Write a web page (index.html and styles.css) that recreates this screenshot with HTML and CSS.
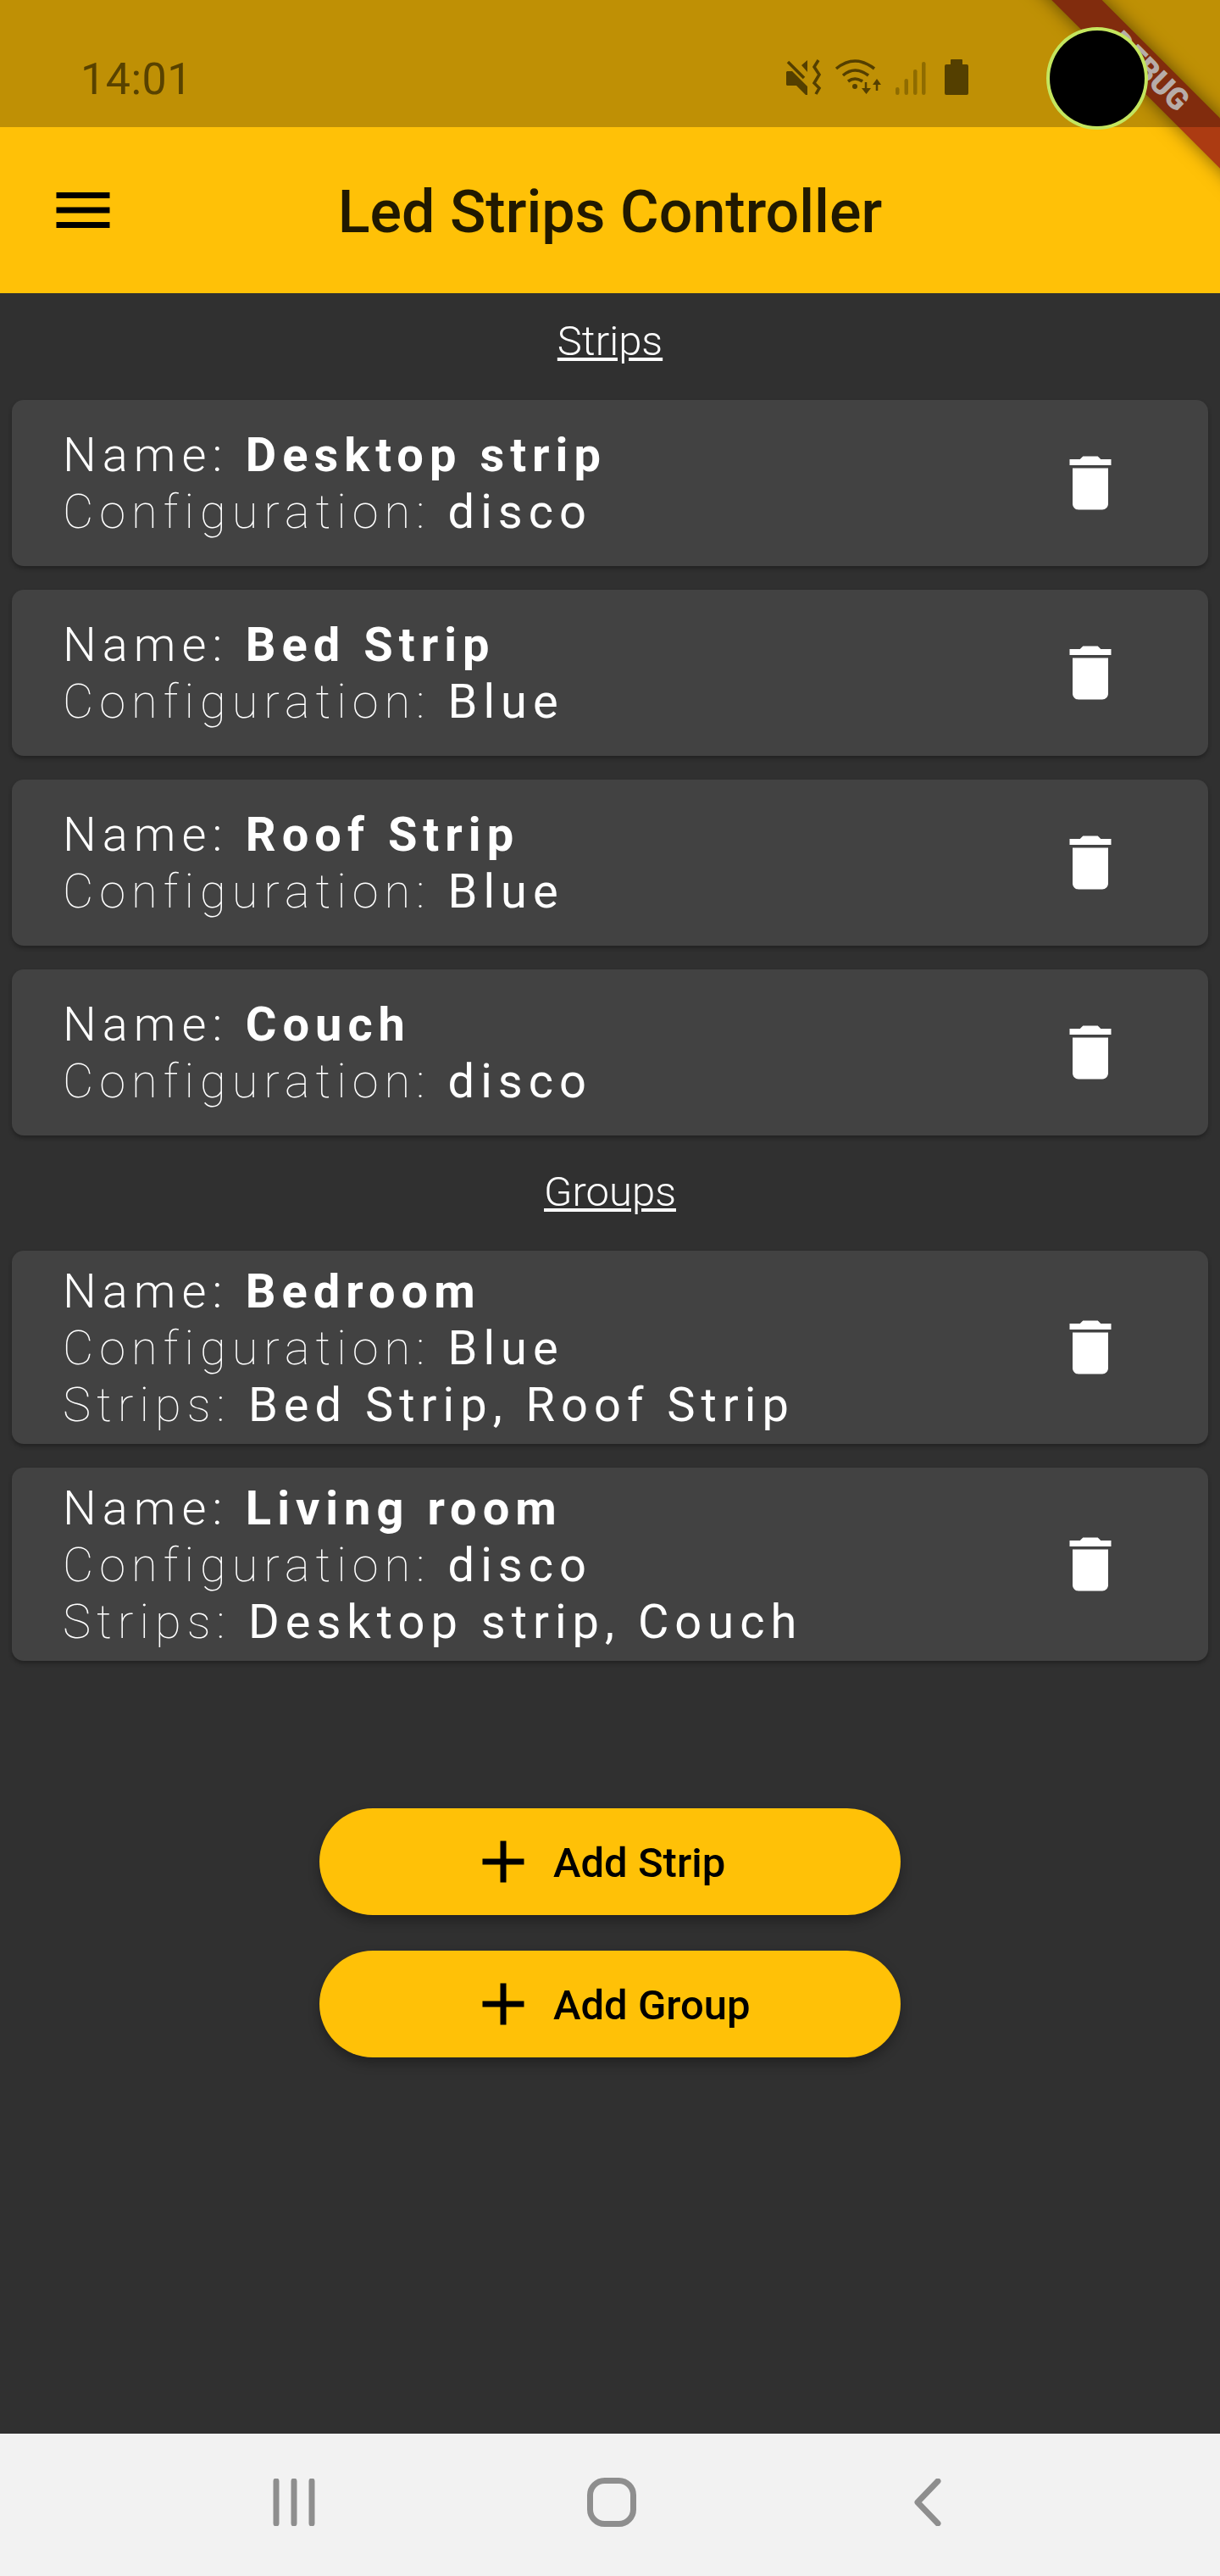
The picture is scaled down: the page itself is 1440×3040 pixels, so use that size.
FILE: index.html
```html
<!DOCTYPE html>
<html lang="en">
<head>
    <meta charset="UTF-8">
    <meta name="viewport" content="width=device-width, initial-scale=1.0">
    <title>Led Strips Controller</title>
    <link rel="stylesheet" href="styles.css">
</head>
<body>
    <header class="top">
        <div class="banner-clip"><div class="banner">DEBUG</div></div>
        <div class="statusbar">
            <span class="clock">14:01</span>
            <svg class="status-icons" width="240" height="65" viewBox="0 0 240 65">
                <path class="ic-fill" d="M8 25l1-1h6L33 42v10h-2L20 41H9l-1-1zM26 17l7-6v14z"/>
                <path class="ic-line" d="M10 13l19 19"/>
                <path class="ic-line" d="M46 11l-5 8 6 9-6 10 6 6-4 7"/>
                <path class="ic-line" d="M67 21q22-18 45 0M75 29q14-12 30 0M81 36q8-6 17 0"/>
                <circle class="ic-dot" cx="89" cy="42" r="3"/>
                <path class="ic-line thin" d="M102 37v12M115 36v11"/>
                <path class="ic-fill" d="M97 44h11l-5.500 7zM110 40h10l-5-7z"/>
                <g class="ic-weak">
                    <rect x="137" y="43" width="4.500" height="9" rx="2.200"/>
                    <rect x="147.500" y="33" width="4.500" height="19" rx="2.200"/>
                    <rect x="158" y="22" width="4.500" height="30" rx="2.200"/>
                    <rect x="168" y="13" width="4.500" height="39" rx="2.200"/>
                </g>
                <path class="ic-fill" d="M203 10h12a1 1 0 0 1 1 1v5h5a2 2 0 0 1 2 2v32a2 2 0 0 1-2 2h-24a2 2 0 0 1-2-2V18a2 2 0 0 1 2-2h5v-5a1 1 0 0 1 1-1z"/>
            </svg>
        </div>
        <div class="appbar">
            <svg class="menu-icon" width="84" height="84" viewBox="0 0 24 24">
                <path d="M3 18h18v-2H3v2zm0-5h18v-2H3v2zm0-7v2h18V6H3z"/>
            </svg>
            <h1 class="title">Led Strips Controller</h1>
        </div>
        <div class="camera"></div>
    </header>

    <main class="content">
        <h2 class="section-label">Strips</h2>
        <div class="card-list">
            <div class="card">
                <div class="card-text">
                    <div class="line"><span class="key-name">Name: </span><b>Desktop strip</b></div>
                    <div class="line"><span class="key">Configuration: </span>disco</div>
                </div>
                <svg class="trash" width="84" height="84" viewBox="0 0 24 24"><path d="M6 19c0 1.100.9 2 2 2h8c1.100 0 2-.9 2-2V7H6v12zM19 4h-3.500l-1-1h-5l-1 1H5v2h14V4z"/></svg>
            </div>
            <div class="card">
                <div class="card-text">
                    <div class="line"><span class="key-name">Name: </span><b>Bed Strip</b></div>
                    <div class="line"><span class="key">Configuration: </span>Blue</div>
                </div>
                <svg class="trash" width="84" height="84" viewBox="0 0 24 24"><path d="M6 19c0 1.100.9 2 2 2h8c1.100 0 2-.9 2-2V7H6v12zM19 4h-3.500l-1-1h-5l-1 1H5v2h14V4z"/></svg>
            </div>
            <div class="card">
                <div class="card-text">
                    <div class="line"><span class="key-name">Name: </span><b>Roof Strip</b></div>
                    <div class="line"><span class="key">Configuration: </span>Blue</div>
                </div>
                <svg class="trash" width="84" height="84" viewBox="0 0 24 24"><path d="M6 19c0 1.100.9 2 2 2h8c1.100 0 2-.9 2-2V7H6v12zM19 4h-3.500l-1-1h-5l-1 1H5v2h14V4z"/></svg>
            </div>
            <div class="card">
                <div class="card-text">
                    <div class="line"><span class="key-name">Name: </span><b>Couch</b></div>
                    <div class="line"><span class="key">Configuration: </span>disco</div>
                </div>
                <svg class="trash" width="84" height="84" viewBox="0 0 24 24"><path d="M6 19c0 1.100.9 2 2 2h8c1.100 0 2-.9 2-2V7H6v12zM19 4h-3.500l-1-1h-5l-1 1H5v2h14V4z"/></svg>
            </div>
        </div>

        <h2 class="section-label groups">Groups</h2>
        <div class="card-list">
            <div class="card group">
                <div class="card-text">
                    <div class="line"><span class="key-name">Name: </span><b>Bedroom</b></div>
                    <div class="line"><span class="key">Configuration: </span>Blue</div>
                    <div class="line"><span class="key">Strips: </span>Bed Strip, Roof Strip</div>
                </div>
                <svg class="trash" width="84" height="84" viewBox="0 0 24 24"><path d="M6 19c0 1.100.9 2 2 2h8c1.100 0 2-.9 2-2V7H6v12zM19 4h-3.500l-1-1h-5l-1 1H5v2h14V4z"/></svg>
            </div>
            <div class="card group">
                <div class="card-text">
                    <div class="line"><span class="key-name">Name: </span><b>Living room</b></div>
                    <div class="line"><span class="key">Configuration: </span>disco</div>
                    <div class="line"><span class="key">Strips: </span>Desktop strip, Couch</div>
                </div>
                <svg class="trash" width="84" height="84" viewBox="0 0 24 24"><path d="M6 19c0 1.100.9 2 2 2h8c1.100 0 2-.9 2-2V7H6v12zM19 4h-3.500l-1-1h-5l-1 1H5v2h14V4z"/></svg>
            </div>
        </div>

        <div class="actions">
            <button type="button" class="add-btn">
                <svg width="84" height="84" viewBox="0 0 24 24"><path d="M19 13h-6v6h-2v-6H5v-2h6V5h2v6h6v2z"/></svg>
                <span>Add Strip</span>
            </button>
            <button type="button" class="add-btn">
                <svg width="84" height="84" viewBox="0 0 24 24"><path d="M19 13h-6v6h-2v-6H5v-2h6V5h2v6h6v2z"/></svg>
                <span>Add Group</span>
            </button>
        </div>
    </main>

    <nav class="navbar">
        <svg class="nav-icon" width="52" height="56" viewBox="0 0 52 56">
            <path d="M4 3v50M25 3v50M46 3v50"/>
        </svg>
        <svg class="nav-icon" width="58" height="58" viewBox="0 0 58 58">
            <rect x="3.500" y="3.500" width="51" height="51" rx="17"/>
        </svg>
        <svg class="nav-icon" width="32" height="56" viewBox="0 0 32 56">
            <path d="M28 3L4 28l24 25"/>
        </svg>
    </nav>
</body>
</html>
```

FILE: styles.css
```css
* {
    box-sizing: border-box;
}
html, body {
    margin: 0;
    padding: 0;
}
body {
    background: #303030;
    color: white;
    font-family: 'Roboto', sans-serif;
    min-height: 100vh;
    display: flex;
    flex-direction: column;
    overflow: hidden;
}

/* top area, status bar sits over the amber */
.top {
    position: relative;
    background: #ffc107;
    height: 346px;
    flex-shrink: 0;
}
.statusbar {
    position: relative;
    z-index: 2;
    height: 150px;
    background: rgba(0, 0, 0, 0.25);
    display: flex;
}
.clock {
    margin-left: 95px;
    margin-top: 64px;
    font-size: 52px;
    letter-spacing: 0.500px;
    line-height: 60px;
    height: 60px;
    color: #584200;
}
.status-icons {
    margin-left: auto;
    margin-right: 280px;
    margin-top: 60px;
}
.ic-fill, .ic-dot {
    fill: #543f00;
}
.ic-line {
    fill: none;
    stroke: #543f00;
    stroke-width: 3.500;
}
.ic-line.thin {
    stroke-width: 2.500;
}
.ic-weak {
    fill: #8f6c00;
}
.appbar {
    height: 196px;
    display: flex;
    align-items: center;
    position: relative;
    padding-left: 56px;
}
.menu-icon {
    fill: #000;
}
.title {
    position: absolute;
    left: 0;
    right: 0;
    top: 59px;
    margin: 0;
    text-align: center;
    font-size: 70px;
    line-height: 82px;
    font-weight: 500;
    color: rgba(0, 0, 0, 0.87);
}
.camera {
    position: absolute;
    z-index: 3;
    top: 32px;
    left: 1235px;
    width: 120px;
    height: 121px;
    border-radius: 50%;
    background: #000;
    border: 4px solid #c4e65e;
}
.banner-clip {
    position: absolute;
    z-index: 1;
    top: 0;
    right: 0;
    width: 300px;
    height: 300px;
    overflow: hidden;
}
.banner {
    position: absolute;
    left: -34px;
    top: 63.500px;
    width: 500px;
    height: 41.500px;
    line-height: 41.500px;
    text-align: center;
    transform: rotate(45deg);
    background: #ac3b12;
    box-shadow: 0 0 21px rgba(0, 0, 0, 0.5);
    color: rgba(255, 255, 255, 0.9);
    font-size: 36px;
    font-weight: 900;
}

/* main list */
.content {
    flex: 1;
    display: flex;
    flex-direction: column;
}
.section-label {
    margin: 28px 0 41px;
    text-align: center;
    font-size: 49px;
    font-weight: 300;
    line-height: 57px;
    text-decoration: underline;
}
.section-label.groups {
    margin: 38px 0 41px;
}
.card-list {
    display: flex;
    flex-direction: column;
    gap: 28px;
    padding: 0 14px;
}
.card {
    height: 196px;
    background: #424242;
    border-radius: 14px;
    box-shadow: 0 3px 5px rgba(0, 0, 0, 0.3);
    display: flex;
    align-items: center;
    justify-content: space-between;
    padding: 0 97px 0 60px;
}
.card.group {
    height: 228px;
}
.card-text {
    margin-top: 2px;
}
.line {
    font-size: 56px;
    line-height: 67px;
    letter-spacing: 7px;
    white-space: nowrap;
}
.line b {
    font-weight: 700;
}
.key-name {
    font-weight: 300;
}
.key {
    font-weight: 100;
}
.trash {
    fill: #fff;
}

/* buttons */
.actions {
    margin-top: 174px;
    display: flex;
    flex-direction: column;
    align-items: center;
    gap: 42px;
}
.add-btn {
    width: 686px;
    height: 126px;
    border: none;
    border-radius: 63px;
    background: #ffc107;
    color: #000;
    font-family: 'Roboto', sans-serif;
    font-size: 49px;
    font-weight: 500;
    display: flex;
    align-items: center;
    gap: 17px;
    padding: 0 0 0 175px;
    box-shadow: 0 7px 14px rgba(0, 0, 0, 0.3);
}
.add-btn span {
    margin-top: 2px;
}

/* android nav */
.navbar {
    height: 168px;
    flex-shrink: 0;
    background: #f2f2f2;
    display: flex;
    align-items: center;
    padding-bottom: 6px;
    position: relative;
}
.nav-icon {
    fill: none;
    stroke: #8e8e8e;
    stroke-width: 7;
    stroke-linecap: round;
    stroke-linejoin: round;
}
.navbar .nav-icon:nth-child(1) {
    margin-left: 322px;
}
.navbar .nav-icon:nth-child(2) {
    margin-left: 319px;
}
.navbar .nav-icon:nth-child(3) {
    margin-left: 328px;
}
```
